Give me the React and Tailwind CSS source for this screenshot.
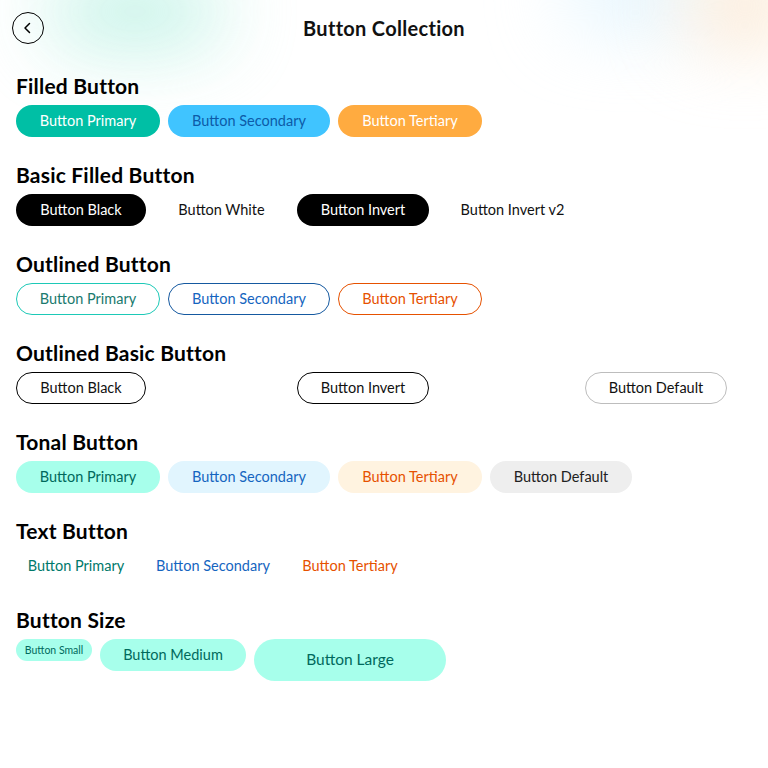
import React from "react";

const font = { fontFamily: "Lato, 'Noto Sans', sans-serif" };

function Btn({ label, className = "", w = "" }) {
  return (
    <button className={`h-8 rounded-full text-[14.5px] leading-none flex items-center justify-center shrink-0 ${w} ${className}`}>
      {label}
    </button>
  );
}

function Section({ title, children }) {
  return (
    <section className="flex flex-col">
      <h2 className="h-7 flex items-center text-[21px] font-bold text-black tracking-[0.2px]">{title}</h2>
      <div className="mt-[5px] flex items-start gap-2">{children}</div>
    </section>
  );
}

export default function App() {
  return (
    <div className="relative w-[768px] h-[768px] bg-white overflow-hidden text-[#111]" style={font}>
      {/* soft blurred blobs in the header */}
      <div className="absolute -top-4 left-[50px] w-[170px] h-[55px] rounded-full bg-[#a8eddc] blur-2xl opacity-90" />
      <div className="absolute -top-8 left-[570px] w-[130px] h-[50px] rounded-full bg-[#d6f0fd] blur-2xl" />
      <div className="absolute -top-6 left-[690px] w-[110px] h-[60px] rounded-full bg-[#fbe2c6] blur-2xl" />

      <header className="relative h-[56px] flex items-center px-3">
        <button className="w-8 h-8 rounded-full border border-black flex items-center justify-center">
          <svg width="14" height="14" viewBox="0 0 14 14" fill="none" stroke="black" strokeWidth="1.5" strokeLinecap="round" strokeLinejoin="round">
            <path d="M8.5 2.5 L4 7 L8.5 11.5" />
          </svg>
        </button>
        <h1 className="absolute inset-x-0 text-center text-[20px] font-bold pointer-events-none tracking-[0.3px]">Button Collection</h1>
      </header>

      <main className="relative px-4 pt-4 flex flex-col gap-6">
        <Section title="Filled Button">
          <Btn w="w-[144px]" label="Button Primary" className="bg-[#00bfa5] text-white" />
          <Btn w="w-[162px]" label="Button Secondary" className="bg-[#40c4ff] text-[#0d5ba8]" />
          <Btn w="w-[144px]" label="Button Tertiary" className="bg-[#ffab40] text-white" />
        </Section>

        <Section title="Basic Filled Button">
          <Btn w="w-[130px]" label="Button Black" className="bg-black text-white" />
          <Btn w="w-[135px]" label="Button White" className="bg-white text-[#111]" />
          <Btn w="w-[132px]" label="Button Invert" className="bg-black text-white" />
          <Btn w="w-[151px]" label="Button Invert v2" className="bg-white text-[#111]" />
        </Section>

        <Section title="Outlined Button">
          <Btn w="w-[144px]" label="Button Primary" className="border border-[#1dc9b7] text-[#1a7a6e]" />
          <Btn w="w-[162px]" label="Button Secondary" className="border border-[#1559a0] text-[#1565c0]" />
          <Btn w="w-[144px]" label="Button Tertiary" className="border border-[#e65100] text-[#e65100]" />
        </Section>

        <Section title="Outlined Basic Button">
          <Btn w="w-[130px]" label="Button Black" className="border border-black text-[#111]" />
          <Btn w="w-[135px]" label="Button White" className="border border-white text-white" />
          <Btn w="w-[132px]" label="Button Invert" className="border border-black text-[#111]" />
          <Btn w="w-[140px]" label="Button Invert v2" className="border border-white text-white" />
          <Btn w="w-[142px]" label="Button Default" className="border border-[#bdbdbd] text-[#111]" />
        </Section>

        <Section title="Tonal Button">
          <Btn w="w-[144px]" label="Button Primary" className="bg-[#a7ffeb] text-[#00695c]" />
          <Btn w="w-[162px]" label="Button Secondary" className="bg-[#e1f5fe] text-[#1565c0]" />
          <Btn w="w-[144px]" label="Button Tertiary" className="bg-[#fff3e0] text-[#e65100]" />
          <Btn w="w-[142px]" label="Button Default" className="bg-[#eeeeee] text-[#212121]" />
        </Section>

        <Section title="Text Button">
          <Btn w="w-[120px]" label="Button Primary" className="text-[#00796b]" />
          <Btn w="w-[138px]" label="Button Secondary" className="text-[#1565c0]" />
          <Btn w="w-[120px]" label="Button Tertiary" className="text-[#e65100]" />
        </Section>

        <Section title="Button Size">
          <button className="h-[22px] w-[76px] rounded-full bg-[#a7ffeb] text-[#00695c] text-[10.5px] leading-none shrink-0">Button Small</button>
          <button className="h-8 w-[146px] rounded-full bg-[#a7ffeb] text-[#00695c] text-[14.5px] leading-none shrink-0">Button Medium</button>
          <button className="h-[42px] w-[192px] rounded-full bg-[#a7ffeb] text-[#00695c] text-[15.5px] leading-none shrink-0">Button Large</button>
        </Section>
      </main>
    </div>
  );
}
